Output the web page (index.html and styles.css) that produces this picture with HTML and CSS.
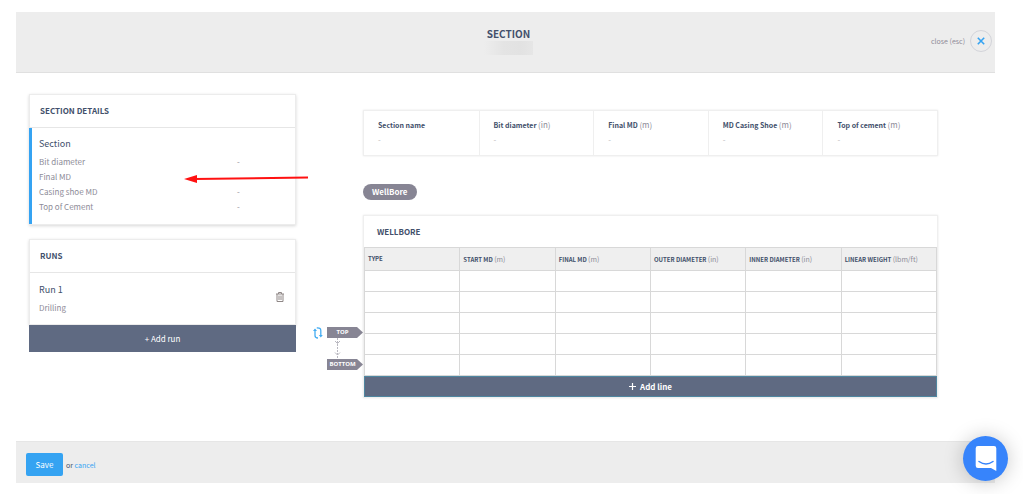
FILE: index.html
```html
<!DOCTYPE html>
<html lang="en">
<head>
<meta charset="utf-8">
<title>Section</title>
<link rel="stylesheet" href="styles.css">
</head>
<body>
<div class="page">
  <header class="topbar">
    <div class="topbar-title">
      <h1>SECTION</h1>
      <div class="redacted"></div>
    </div>
    <div class="close-group">
      <label for="close">close (esc)</label>
      <button id="close" class="close-button" type="button" aria-label="Close">
        <svg width="8" height="8" viewBox="0 0 8 8"><path d="M.8.8l6.400 6.400M7.200.8L.8 7.200" stroke="#35a3f2" stroke-width="1.600" fill="none"/></svg>
      </button>
    </div>
  </header>

  <main class="content">
    <aside class="sidebar">
      <section class="card details">
        <h2>SECTION DETAILS</h2>
        <div class="details-body">
          <h3>Section</h3>
          <dl>
            <dt>Bit diameter</dt><dd>-</dd>
            <dt>Final MD</dt><dd></dd>
            <dt>Casing shoe MD</dt><dd>-</dd>
            <dt>Top of Cement</dt><dd>-</dd>
          </dl>
        </div>
        <svg class="arrow" width="125" height="10" viewBox="0 0 125 10"><path d="M10 6L124 4.500" stroke="#f11" stroke-width="2"/><path d="M0 6L13 2v8z" fill="#f11"/></svg>
      </section>

      <section class="runs">
        <div class="card">
          <h2>RUNS</h2>
          <div class="run">
            <div>
              <h3>Run 1</h3>
              <p>Drilling</p>
            </div>
            <button class="icon-button delete" type="button" aria-label="Delete run">
              <svg width="8" height="10" viewBox="0 0 8 10" fill="none" stroke="#8f8786" stroke-width="1"><path d="M0 2h8M2.500 2V.5h3V2M1 2v7.500h6V2M3 3.500V8M5 3.500V8"/></svg>
            </button>
          </div>
        </div>
        <button class="add-run" type="button">+ Add run</button>
      </section>
    </aside>

    <div class="workspace">
      <section class="summary panel">
        <div class="summary-item"><h4>Section name</h4><p>-</p></div>
        <div class="summary-item"><h4>Bit diameter <span>(in)</span></h4><p>-</p></div>
        <div class="summary-item"><h4>Final MD <span>(m)</span></h4><p>-</p></div>
        <div class="summary-item"><h4>MD Casing Shoe <span>(m)</span></h4><p>-</p></div>
        <div class="summary-item"><h4>Top of cement <span>(m)</span></h4><p>-</p></div>
      </section>

      <button class="pill" type="button">WellBore</button>

      <div class="direction">
        <button class="icon-button" type="button" aria-label="Swap direction">
          <svg width="10" height="12" viewBox="0 0 10 12" fill="none" stroke="#45adf2" stroke-width="1.300"><path d="M2 2.500V8.500Q2 11 5 11M3.800 1Q7.800.6 7.800 3.500V9"/><path d="M0 4L2 1.500 4 4zM5.800 8l2 2.500L9.800 8z" fill="#45adf2" stroke="none"/></svg>
        </button>
        <div class="markers">
          <span class="marker">TOP</span>
          <svg class="link" width="7" height="21" viewBox="0 0 7 21" fill="none" stroke="#b9b8c0"><path d="M3.500 0v21" stroke-dasharray="2 1"/><path d="M1 3l2.500 2.500L6 3M1 14.500L3.500 17 6 14.500"/></svg>
          <span class="marker">BOTTOM</span>
        </div>
      </div>

      <section class="wellbore panel">
        <h2>WELLBORE</h2>
        <table>
          <thead>
            <tr>
              <th>TYPE</th>
              <th>START MD <span>(m)</span></th>
              <th>FINAL MD <span>(m)</span></th>
              <th>OUTER DIAMETER <span>(in)</span></th>
              <th>INNER DIAMETER <span>(in)</span></th>
              <th>LINEAR WEIGHT <span>(lbm/ft)</span></th>
            </tr>
          </thead>
          <tbody>
            <tr><td></td><td></td><td></td><td></td><td></td><td></td></tr>
            <tr><td></td><td></td><td></td><td></td><td></td><td></td></tr>
            <tr><td></td><td></td><td></td><td></td><td></td><td></td></tr>
            <tr><td></td><td></td><td></td><td></td><td></td><td></td></tr>
            <tr><td></td><td></td><td></td><td></td><td></td><td></td></tr>
          </tbody>
        </table>
        <button class="add-line" type="button">
          <svg width="7" height="7" viewBox="0 0 7 7"><path d="M3.500 0v7M0 3.500h7" stroke="#fff" stroke-width="1.200"/></svg>
          Add line
        </button>
      </section>
    </div>
  </main>

  <footer class="actions">
    <button class="save" type="button">Save</button>
    <span>or <a href="#">cancel</a></span>
  </footer>
</div>

<button class="chat" type="button" aria-label="Open chat">
  <svg width="22" height="25" viewBox="0 0 22 25"><path d="M3 0h16q2.300 0 2.300 2.300V25L16 22H3Q.7 22 .7 19.700V2.300Q.7 0 3 0z" fill="#fff"/><path d="M4 15.500q7 5 14 0" fill="none" stroke="#3784fb" stroke-width="1.500" stroke-linecap="round"/></svg>
</button>
</body>
</html>
```
FILE: styles.css
```css
* {
  box-sizing: border-box;
}

body {
  margin: 0;
  background: #fff;
  color: #42506b;
  font-family: "Noto Sans CJK SC", "Noto Sans", sans-serif;
  font-size: 8px;
  line-height: 16px;
}

h1, h2, h3, h4, p, dl, dd {
  margin: 0;
}

button {
  padding: 0;
  border: 0;
  background: none;
  color: inherit;
  font: inherit;
  cursor: pointer;
}

svg {
  display: block;
}

.page {
  display: flex;
  flex-direction: column;
  min-height: 100vh;
  padding: 12px 28px 11px 16px;
}

.topbar {
  display: grid;
  grid-template-columns: 1fr auto 1fr;
  align-items: center;
  padding: 15px 3px 17px 9px;
  border-bottom: 1px solid #e0e0e0;
  background: #ededed;
}

.topbar-title {
  grid-column: 2;
}

.topbar h1 {
  font-size: 10px;
  line-height: 14px;
  text-align: center;
}

.redacted {
  width: 49px;
  height: 14px;
  background: linear-gradient(90deg, #ededed, #e4e4e4 40%, #e2e2e2 75%, #e6e6e6);
}

.close-group {
  display: flex;
  align-items: center;
  justify-self: end;
  gap: 5px;
  color: #8d8b97;
  font-size: 7px;
}

.close-button {
  display: grid;
  place-items: center;
  width: 22px;
  height: 22px;
  border: 1px solid #d3d4da;
  border-radius: 50%;
}

.content {
  display: flex;
  flex: 1;
  gap: 17px;
  padding: 21px 57px 40px 13px;
}

.sidebar {
  flex: 0 0 267px;
}

.card {
  border: 1px solid #ececec;
  box-shadow: 0 1px 3px rgba(0, 0, 0, 0.16);
}

.card h2 {
  padding: 8px 10px;
  border-bottom: 1px solid #e6e6e6;
  font-size: 8px;
}

.card h3 {
  font-size: 9px;
  font-weight: 400;
}

.details {
  position: relative;
  margin-bottom: 14px;
}

.details-body {
  margin-left: -1px;
  padding: 8px 7px 10px;
  border-left: 3px solid #35a3f2;
}

.details dl {
  display: grid;
  grid-template-columns: 198px 1fr;
  grid-auto-rows: 15px;
  padding-top: 2px;
  color: #8d8b97;
}

.arrow {
  position: absolute;
  left: 154px;
  top: 78px;
}

.run {
  display: flex;
  align-items: center;
  justify-content: space-between;
  padding: 9px 11px 8px 9px;
}

.run p {
  padding-top: 2px;
  color: #8d8b97;
}

.delete {
  padding-bottom: 4px;
}

.add-run,
.add-line {
  width: 100%;
  background: #5f6a82;
  color: #fff;
}

.add-run {
  height: 27px;
}

.workspace {
  display: grid;
  flex: 1;
  grid-template-columns: 50px minmax(0, 1fr);
  align-content: start;
}

.panel {
  grid-column: 2;
  border: 1px solid #efefef;
  box-shadow: 0 0 2px rgba(0, 0, 0, 0.1);
}

.summary {
  display: grid;
  grid-template-columns: repeat(5, 1fr);
  margin-top: 16px;
}

.summary-item {
  padding: 6px 14px 8px;
}

.summary-item + .summary-item {
  border-left: 1px solid #efefef;
}

.summary h4 {
  font-size: 7px;
}

.summary span,
th span {
  color: #8d8b97;
  font-weight: 400;
}

.summary span {
  font-size: 8px;
}

.summary p {
  line-height: 14px;
  color: #bbb;
}

.pill {
  grid-column: 2;
  justify-self: start;
  margin: 28px 0 15px;
  padding: 0 9px;
  border-radius: 8px;
  background: #878594;
  color: #fff;
  font-weight: 700;
}

.direction {
  display: flex;
  align-items: flex-start;
  gap: 4px;
  padding-top: 112px;
}

.markers {
  width: 36px;
}

.marker {
  display: block;
  padding-right: 5px;
  background: #878594;
  clip-path: polygon(0 0, 30px 0, 100% 50%, 30px 100%, 0 100%);
  color: #fff;
  font-family: "Open Sans", sans-serif;
  font-size: 6px;
  font-weight: 700;
  line-height: 11px;
  text-align: center;
}

.link {
  margin-left: 7px;
}

.wellbore h2 {
  padding: 8px 13px 7px;
  font-size: 8px;
}

table {
  width: 100%;
  border-collapse: collapse;
  table-layout: fixed;
}

th,
td {
  height: 21px;
  padding: 0 3px;
  border: 1px solid #d8d8d8;
}

th {
  height: 23px;
  background: #efefef;
  font-size: 6px;
  text-align: left;
  white-space: nowrap;
}

th span {
  font-size: 7px;
}

.add-line {
  display: flex;
  align-items: center;
  justify-content: center;
  gap: 4px;
  height: 21px;
  border: 1px solid #4f86a0;
  font-weight: 700;
}

.actions {
  display: flex;
  align-items: center;
  gap: 3px;
  padding: 11px 10px 7px;
  border-top: 1px solid #e6e6e6;
  background: #ededed;
  font-size: 7px;
}

.save {
  width: 37px;
  height: 23px;
  border-radius: 2px;
  background: #35a3f2;
  color: #fff;
  font-size: 8px;
}

.actions a {
  color: #35a3f2;
  text-decoration: none;
}

.chat {
  position: fixed;
  right: 15px;
  bottom: 13px;
  display: grid;
  place-items: center;
  width: 45px;
  height: 45px;
  border-radius: 50%;
  background: #3784fb;
  box-shadow: 0 1px 20px rgba(0, 0, 0, 0.22);
}
```
